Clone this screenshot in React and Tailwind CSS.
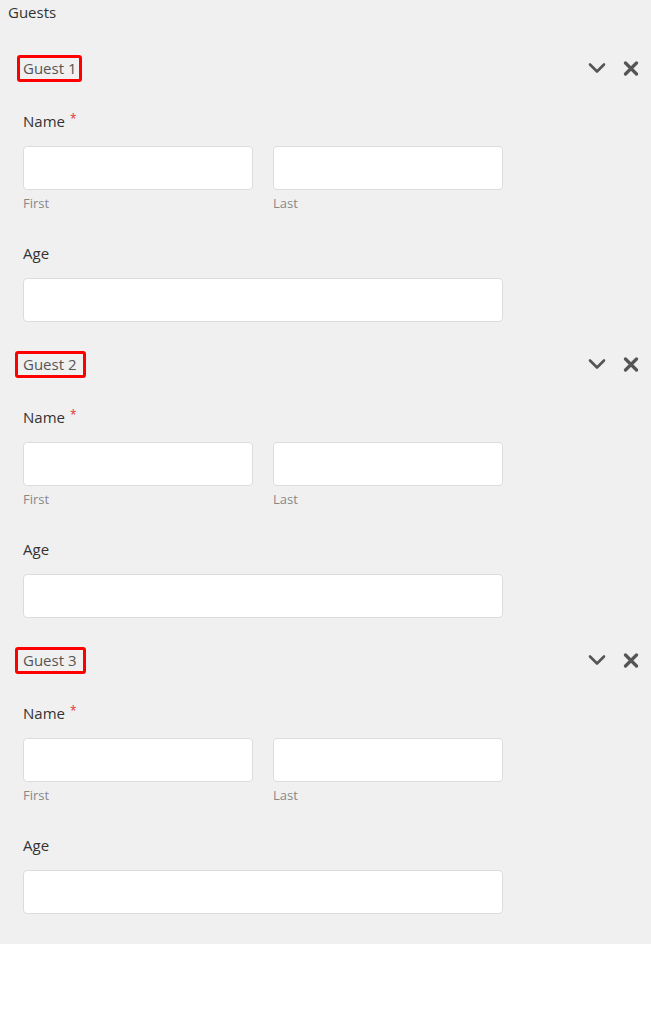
import React from "react";

function Chevron() {
  return (
    <svg width="18" height="12" viewBox="0 0 18 12" className="block">
      <path d="M2 2.5 L9 9.5 L16 2.5" fill="none" stroke="#555" strokeWidth="2.6" strokeLinecap="round" strokeLinejoin="round" />
    </svg>
  );
}

function Cross() {
  return (
    <svg width="16" height="15" viewBox="0 0 16 15" className="block">
      <path d="M2.5 2 L13.5 13 M13.5 2 L2.5 13" fill="none" stroke="#555" strokeWidth="3.2" strokeLinecap="round" />
    </svg>
  );
}

function Guest({ n, first }) {
  return (
    <div className="flex flex-col">
      <div className="flex h-[26px] items-center justify-between pr-[12px]">
        <div
          className={
            first
              ? "ml-[17px] flex h-[27px] items-center rounded-[3px] border-[3px] border-[#ff0000] pl-[3px] pr-[2px] text-[15px] text-[#555]"
              : "ml-[15px] flex h-[27px] items-center rounded-[3px] border-[3px] border-[#ff0000] pl-[5px] pr-[6px] text-[15px] text-[#555]"
          }
        >
          Guest {n}
        </div>
        <div className="flex items-center gap-[17px]">
          <Chevron />
          <Cross />
        </div>
      </div>
      <div className="mt-[30px] flex h-[20px] items-center pl-[23px] text-[15px] text-[#333]">
        Name<span className="relative top-[-2px] ml-[5px] text-[12px] text-[#d33]">*</span>
      </div>
      <div className="mt-[15px] flex gap-[20px] pl-[23px]">
        <div className="flex w-[230px] flex-col">
          <div className="h-[44px] rounded-[4px] border border-[#dcdcdc] bg-white" />
          <div className="mt-[5px] h-[16px] text-[13px] leading-[16px] text-[#888]">First</div>
        </div>
        <div className="flex w-[230px] flex-col">
          <div className="h-[44px] rounded-[4px] border border-[#dcdcdc] bg-white" />
          <div className="mt-[5px] h-[16px] text-[13px] leading-[16px] text-[#888]">Last</div>
        </div>
      </div>
      <div className="mt-[32px] flex h-[20px] items-center pl-[23px] text-[15px] text-[#333]">Age</div>
      <div className="mt-[15px] pl-[23px]">
        <div className="h-[44px] w-[480px] rounded-[4px] border border-[#dcdcdc] bg-white" />
      </div>
    </div>
  );
}

export default function App() {
  return (
    <div className="min-h-[1024px] bg-white" style={{ fontFamily: "'Open Sans', 'Noto Sans', sans-serif" }}>
      <div className="bg-[#f0f0f0] pb-[30px]">
        <div className="flex h-[24px] items-center pl-[8px] text-[15px] text-[#333]">Guests</div>
        <div className="mt-[31px] flex flex-col gap-[29px]">
          <Guest n={1} first />
          <Guest n={2} />
          <Guest n={3} />
        </div>
      </div>
    </div>
  );
}
